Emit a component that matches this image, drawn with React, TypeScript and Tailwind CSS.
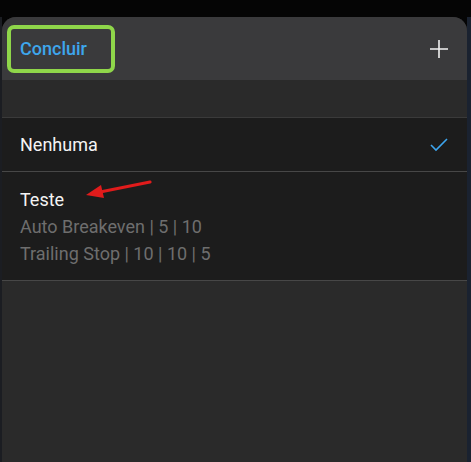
import React from 'react';

const font = { fontFamily: 'Roboto, "Noto Sans", sans-serif' };

function PlusIcon() {
  return (
    <svg width="20" height="20" viewBox="0 0 20 20" aria-hidden>
      <path d="M10 1v18M1 10h18" stroke="#f2f2f2" strokeWidth="1.6" fill="none" />
    </svg>
  );
}

function CheckIcon() {
  return (
    <svg width="18" height="14" viewBox="0 0 18 14" aria-hidden>
      <path d="M1 7l5 5L17 1" stroke="#3da5ee" strokeWidth="1.6" fill="none" />
    </svg>
  );
}

export default function App() {
  return (
    <div className="relative flex h-[462px] w-[471px] flex-col bg-[#050505]" style={font}>
      <div className="h-[17px] shrink-0" />
      <div className="flex flex-1">
        <div className="w-[2px] bg-[#1b1d22]" />
        <div className="flex flex-1 flex-col overflow-hidden rounded-t-[14px] bg-[#2a2a2a]">
          {/* header */}
          <div className="flex h-[63px] items-center justify-between bg-[#3a3a3c] pl-[5px] pr-[18px]">
            <div className="flex h-[48px] w-[108px] items-center rounded-[7px] border-4 border-[#8fd64a] pl-[9px]">
              <span className="text-[18px] font-medium text-[#3ea6ec]">Concluir</span>
            </div>
            <PlusIcon />
          </div>

          <div className="h-[37px]" />

          {/* options */}
          <div className="border-t border-[#3a3a3a] bg-[#1c1c1c]">
            <div className="flex h-[54px] items-center justify-between border-b border-[#474747] pl-[18px] pr-[19px]">
              <span className="text-[18px] text-[#f4f4f4]">Nenhuma</span>
              <CheckIcon />
            </div>
            <div className="flex flex-col border-b border-[#474747] pb-[13px] pl-[18px] pt-[14px] text-[18px] leading-[27px]">
              <span className="text-[#f4f4f4]">Teste</span>
              <span className="text-[#6e6e6e]">Auto Breakeven | 5 | 10</span>
              <span className="text-[#6e6e6e]">Trailing Stop | 10 | 10 | 5</span>
            </div>
          </div>
        </div>
        <div className="w-[4px] bg-[#1a2230]" />
      </div>

      {/* annotation arrow */}
      <svg className="absolute left-[84px] top-[176px]" width="72" height="26" viewBox="0 0 72 26" aria-hidden>
        <path d="M66 6L16 16" stroke="#e01b1b" strokeWidth="3.2" strokeLinecap="round" />
        <path d="M2 19L17 9L20 22Z" fill="#e01b1b" />
      </svg>
    </div>
  );
}
